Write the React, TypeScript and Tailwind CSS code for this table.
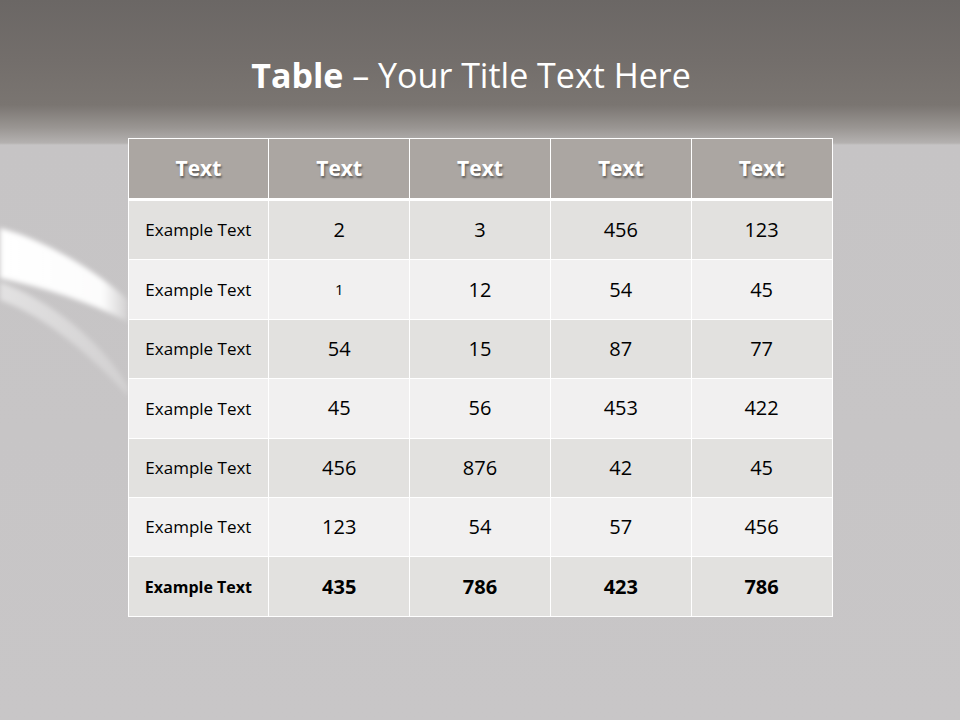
import React from "react";

const rows: (string | number)[][] = [
  ["Example Text", 2, 3, 456, 123],
  ["Example Text", 1, 12, 54, 45],
  ["Example Text", 54, 15, 87, 77],
  ["Example Text", 45, 56, 453, 422],
  ["Example Text", 456, 876, 42, 45],
  ["Example Text", 123, 54, 57, 456],
  ["Example Text", 435, 786, 423, 786],
];

export default function App() {
  return (
    <div
      className="relative w-[960px] h-[720px] overflow-hidden bg-[linear-gradient(to_bottom,#6b6765_0px,#736e6b_60px,#7a7571_105px,#9a9693_128px,#b4b1b0_143px,#c6c4c5_145px,#c8c6c7_720px)]"
      style={{ fontFamily: '"Open Sans", "Noto Sans", sans-serif' }}
    >
      <svg className="absolute left-0 top-[200px]" width="140" height="220" viewBox="0 0 140 220">
        <defs>
          <linearGradient id="sw1" x1="0" y1="0" x2="1" y2="0">
            <stop offset="0" stopColor="#ffffff" stopOpacity="1" />
            <stop offset="0.8" stopColor="#ffffff" stopOpacity="0.95" />
            <stop offset="1" stopColor="#ffffff" stopOpacity="0.2" />
          </linearGradient>
          <linearGradient id="sw2" x1="0" y1="0" x2="1" y2="0">
            <stop offset="0" stopColor="#ffffff" stopOpacity="0.5" />
            <stop offset="1" stopColor="#ffffff" stopOpacity="0.2" />
          </linearGradient>
          <filter id="bl" x="-20%" y="-20%" width="140%" height="140%">
            <feGaussianBlur stdDeviation="2.5" />
          </filter>
        </defs>
        <path d="M0 28 C45 40 95 70 128 100 L128 122 C90 102 45 88 0 78 Z" fill="url(#sw1)" filter="url(#bl)" />
        <path d="M0 82 C50 100 100 140 128 186 L128 196 C95 160 50 118 0 100 Z" fill="url(#sw2)" filter="url(#bl)" />
      </svg>

      <div className="relative flex flex-col items-center">
        <div className="h-[138px] pt-[54px] pr-[18px] text-[34px] leading-[42px] text-white">
          <span className="font-bold">Table</span> – Your Title Text Here
        </div>
        <div className="w-[705px] border-t border-l border-white">
          <div className="grid grid-cols-5 h-[62px] bg-[#aba6a2] border-b-[3px] border-white">
            {["Text", "Text", "Text", "Text", "Text"].map((t, i) => (
              <div
                key={i}
                className="flex items-center justify-center border-r border-white text-[21px] font-bold text-white [text-shadow:1px_2px_2px_rgba(0,0,0,0.45)]"
              >
                {t}
              </div>
            ))}
          </div>
          {rows.map((r, ri) => {
            const last = ri === rows.length - 1;
            return (
              <div
                key={ri}
                className={`grid grid-cols-5 h-[59.4px] border-b border-white text-black ${
                  ri % 2 === 0 ? "bg-[#e2e1df]" : "bg-[#f1f0f0]"
                } ${last ? "font-bold" : ""}`}
              >
                {r.map((c, ci) => (
                  <div
                    key={ci}
                    className={`flex items-center justify-center border-r border-white ${
                      ci === 0
                        ? last
                          ? "text-[16px]"
                          : "text-[17px]"
                        : ri === 1 && ci === 1
                        ? "text-[15px]"
                        : "text-[20px]"
                    }`}
                  >
                    {c}
                  </div>
                ))}
              </div>
            );
          })}
        </div>
      </div>
    </div>
  );
}
